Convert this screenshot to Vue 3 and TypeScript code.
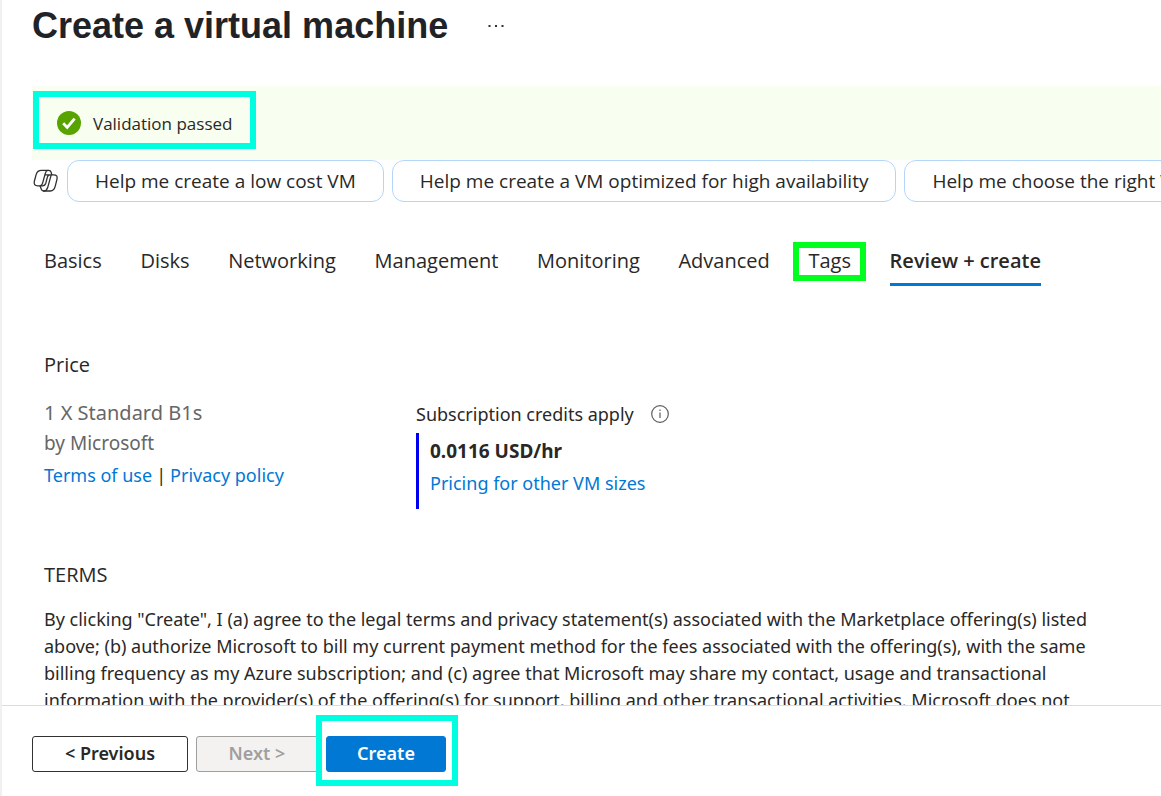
<script setup lang="ts">
interface Tab {
  label: string
  active?: boolean
  marked?: boolean
}

const suggestions: string[] = [
  'Help me create a low cost VM',
  'Help me create a VM optimized for high availability',
  'Help me choose the right VM size for my workload',
]

const tabs: Tab[] = [
  { label: 'Basics' },
  { label: 'Disks' },
  { label: 'Networking' },
  { label: 'Management' },
  { label: 'Monitoring' },
  { label: 'Advanced' },
  { label: 'Tags', marked: true },
  { label: 'Review + create', active: true },
]
</script>

<template>
  <div class="blade">
    <header class="heading">
      <h1>Create a virtual machine</h1>
      <button class="more" type="button" aria-label="More actions">
        <svg width="18" height="4" viewBox="0 0 18 4" fill="#323130">
          <rect x="0.5" y="1" width="2" height="2" />
          <rect x="7" y="1" width="2" height="2" />
          <rect x="13.5" y="1" width="2" height="2" />
        </svg>
      </button>
    </header>

    <main class="content">
      <div class="banner" role="status">
        <div class="banner-message">
          <svg width="24" height="24" viewBox="0 0 24 24">
            <circle cx="12" cy="12" r="12" fill="#57a300" />
            <path d="M6.2 12.2l4 4.2 7.4-8.8" fill="none" stroke="#fff" stroke-width="2.8" />
          </svg>
          <span>Validation passed</span>
        </div>
      </div>

      <div class="suggestions">
        <svg class="copilot" width="26" height="24" viewBox="0 0 26 24" fill="none" stroke="#323130" stroke-width="1.3" stroke-linejoin="round" stroke-linecap="round">
          <path d="M8.4 1.4H15.6Q17.6 1.4 18.2 3.4L18.8 5.8H20.6Q25 5.8 24 10.2L22.2 17.4Q21 22 17.4 22H10.6Q8.8 22 8.2 20L7 16.8H4.8Q.2 16.8 1.4 12L3.2 5.4Q4.4 1.4 8.4 1.4Z" />
          <path d="M15 1.4Q13 1.6 12.4 4L9.6 14.2Q8.8 16.8 7 16.8H9.6Q12 16.8 12.8 14.2L14.4 8.2Q15 5.8 17 5.8H18.8M18.2 5.8L14.6 18.8Q13.6 22 10.6 22M12.2 5.8H17" />
        </svg>
        <button v-for="text in suggestions" :key="text" class="suggestion" type="button">{{ text }}</button>
      </div>

      <nav class="tabs" role="tablist">
        <button
          v-for="tab in tabs"
          :key="tab.label"
          type="button"
          role="tab"
          class="tab"
          :class="{ active: tab.active, marked: tab.marked }"
          :aria-selected="!!tab.active"
        >{{ tab.label }}</button>
      </nav>

      <section class="price">
        <h2>Price</h2>
        <div class="price-columns">
          <div class="product">
            <p class="sku">1 X Standard B1s</p>
            <p class="publisher">by Microsoft</p>
            <p class="links"><a href="#">Terms of use</a><span class="divider">|</span><a href="#">Privacy policy</a></p>
          </div>
          <div class="cost">
            <p class="credits">
              <span>Subscription credits apply</span>
              <svg width="18" height="18" viewBox="0 0 18 18" fill="none" stroke="#605e5c">
                <circle cx="9" cy="9" r="8.3" stroke-width="1.2" />
                <path d="M9 7.5v5.5M9 4.5v1.5" stroke-width="1.2" />
              </svg>
            </p>
            <div class="rate">
              <strong>0.0116 USD/hr</strong>
              <a href="#">Pricing for other VM sizes</a>
            </div>
          </div>
        </div>
      </section>

      <section class="terms">
        <h2>TERMS</h2>
        <p>
          By clicking "Create", I (a) agree to the legal terms and privacy statement(s) associated with the Marketplace offering(s) listed
          above; (b) authorize Microsoft to bill my current payment method for the fees associated with the offering(s), with the same
          billing frequency as my Azure subscription; and (c) agree that Microsoft may share my contact, usage and transactional
          information with the provider(s) of the offering(s) for support, billing and other transactional activities. Microsoft does not
        </p>
      </section>
    </main>

    <footer class="actions">
      <button class="action previous" type="button">&lt; Previous</button>
      <button class="action next" type="button" disabled>Next &gt;</button>
      <button class="action create" type="button">Create</button>
    </footer>
  </div>
</template>

<style>
body {
  margin: 0;
}
</style>

<style scoped>
.blade {
  box-sizing: border-box;
  height: 100vh;
  display: flex;
  flex-direction: column;
  overflow: hidden;
  border-left: 2px solid #f0f0f0;
  background: #fff;
  color: #292827;
  font-family: "Noto Sans", "Open Sans", sans-serif;
  font-size: 18px;
  line-height: 27px;
}
h1,
h2,
p {
  margin: 0;
}
button {
  font: inherit;
  color: inherit;
  cursor: pointer;
}
a {
  color: #0078d4;
  text-decoration: none;
}
.heading {
  display: flex;
  align-items: center;
  gap: 40px;
  height: 52px;
  padding: 0 30px 34px;
  flex: none;
}
h1 {
  font: bold 36px/50px "Liberation Sans", Arial, sans-serif;
  color: #1f2328;
  white-space: nowrap;
}
.more {
  display: flex;
  padding: 0;
  border: 0;
  background: none;
}
.content {
  flex: 1;
  min-height: 0;
  overflow: hidden;
}
.banner {
  box-sizing: border-box;
  height: 74px;
  margin-left: 30px;
  padding: 5px 1px;
  border-radius: 3px 0 0 3px;
  background: #f8fff0;
}
.banner-message {
  box-sizing: border-box;
  display: flex;
  align-items: center;
  gap: 12px;
  width: max-content;
  height: 58px;
  padding: 6px 18px 0;
  border: 6px solid #00ffe1;
  font-family: "Open Sans", "Noto Sans", sans-serif;
  font-size: 17px;
}
.suggestions {
  display: flex;
  align-items: center;
  gap: 8px;
  padding-left: 31px;
  overflow: hidden;
}
.copilot {
  flex: none;
}
.suggestion {
  flex: none;
  height: 42px;
  padding: 1px 27px 0;
  border: 1px solid #b4d6fa;
  border-radius: 12px;
  background: #fff;
  font-family: "Open Sans", "Noto Sans", sans-serif;
  font-size: 19px;
  white-space: nowrap;
}
.tabs {
  display: flex;
  justify-content: space-between;
  max-width: 997px;
  padding: 34px 42px 0;
}
.tab {
  position: relative;
  height: 50px;
  padding: 2px 0 0;
  border: 0;
  border-bottom: 3px solid transparent;
  background: none;
  font-family: "Open Sans", "Noto Sans", sans-serif;
  font-size: 20px;
  white-space: nowrap;
}
.tab.active {
  border-bottom-color: #0078d4;
  font-weight: 600;
}
.tab.marked::after {
  content: "";
  position: absolute;
  inset: 6px -15px 2px;
  border: 6px solid #00ff1e;
}
h2 {
  font-family: "Open Sans", "Noto Sans", sans-serif;
  font-size: 20px;
  font-weight: 400;
  line-height: 28px;
}
.price {
  padding: 65px 42px 0;
}
.price-columns {
  display: flex;
  padding-top: 20px;
}
.product {
  flex: none;
  width: 372px;
}
.sku,
.publisher {
  color: #666;
}
.sku {
  font-size: 20px;
  line-height: 28px;
}
.publisher {
  font-size: 19px;
  line-height: 33px;
}
.links {
  line-height: 30px;
}
.divider {
  margin: 0 4px;
}
.credits {
  display: flex;
  align-items: flex-start;
  gap: 17px;
  height: 34px;
  line-height: 30px;
}
.credits svg {
  margin-top: 6px;
}
.rate {
  display: flex;
  flex-direction: column;
  align-items: flex-start;
  box-sizing: border-box;
  height: 76px;
  padding: 2px 0 0 11px;
  border-left: 3px solid #0000f0;
  line-height: 32px;
}
.rate strong {
  font-size: 19px;
  font-weight: 700;
}
.terms {
  padding: 52px 42px 0;
}
.terms p {
  padding-top: 17px;
}
.actions {
  flex: none;
  display: flex;
  gap: 8px;
  height: 60px;
  padding: 30px 30px 0;
  border-top: 1px solid #dcdcdc;
}
.action {
  position: relative;
  height: 36px;
  padding: 0 0 2px;
  border: 1px solid #323130;
  border-radius: 3px;
  background: #fff;
  font-weight: 600;
}
.previous {
  width: 156px;
}
.next {
  width: 122px;
  border-color: #a19f9d;
  background: #f3f2f1;
  color: #a19f9d;
}
.create {
  width: 120px;
  border-color: #0078d4;
  background: #0078d4;
  color: #fff;
}
.create::after {
  content: "";
  position: absolute;
  inset: -22px -13px -15px -11px;
  border: 6px solid #00ffe1;
}
</style>
